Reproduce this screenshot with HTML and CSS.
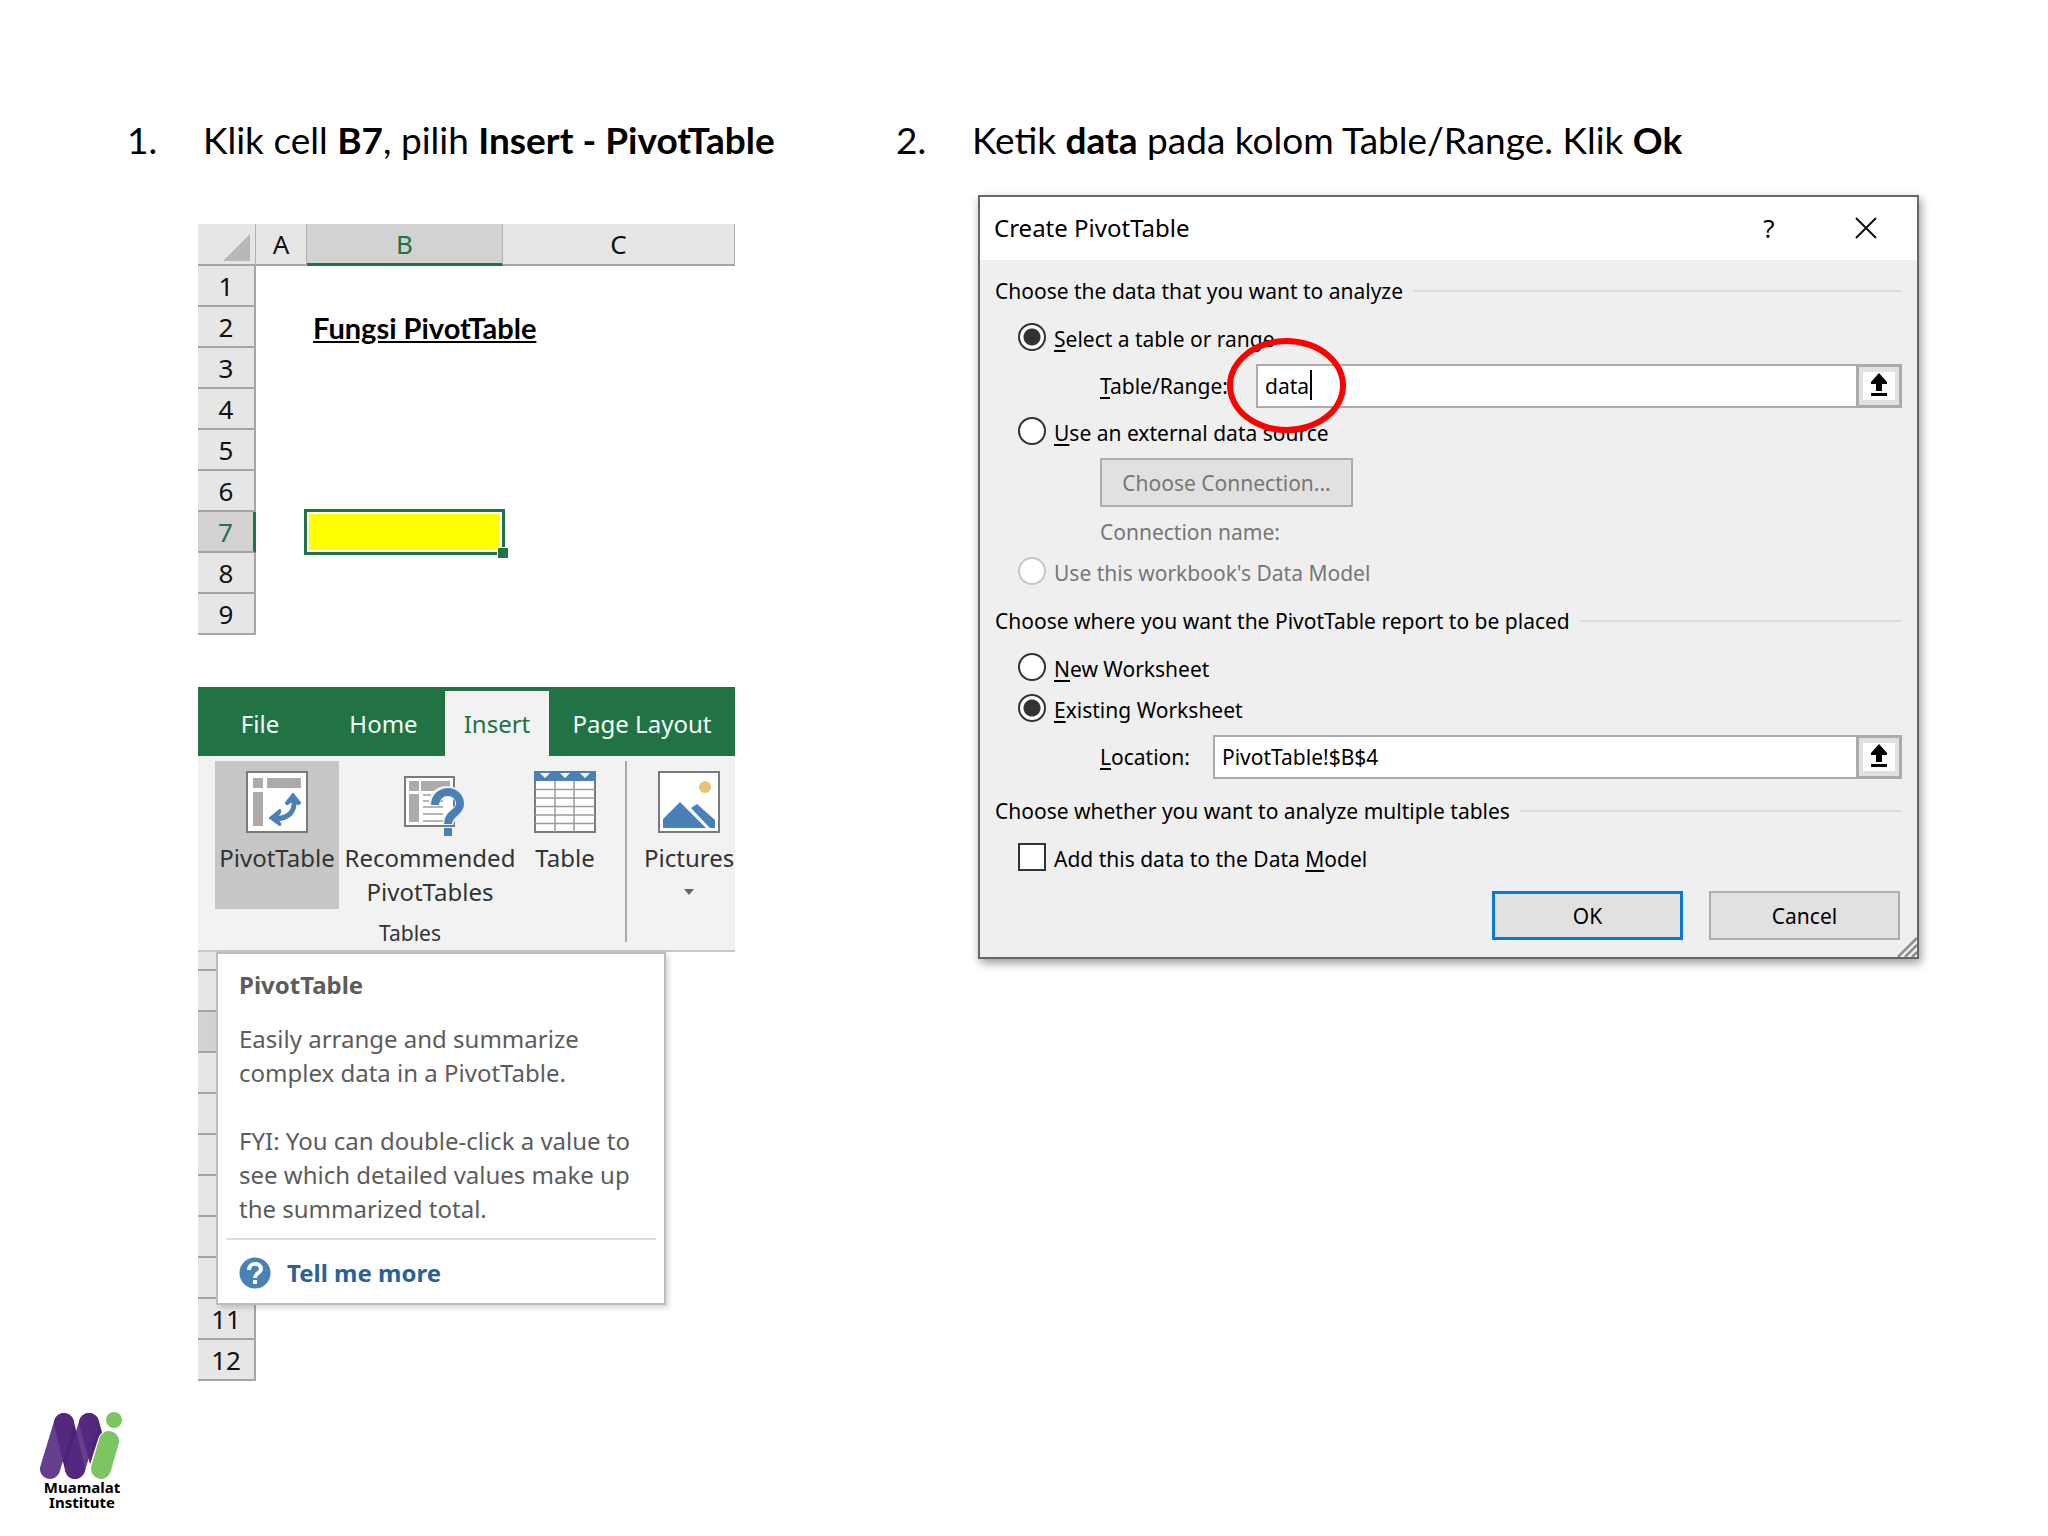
FILE: index.html
```
<!DOCTYPE html>
<html lang="id">
<head>
  <meta charset="UTF-8" />
  <meta name="viewport" content="width=device-width, initial-scale=1.0" />
  <title>Fungsi PivotTable</title>
  <link rel="stylesheet" href="styles.css">
</head>
<body>
  <main class="steps">
    <section class="step">
      <h2 class="step-title"><span class="step-number">1.</span><span>Klik cell <b>B7</b>, pilih <b>Insert - PivotTable</b></span></h2>

      <div class="step-body">
        <table class="sheet">
          <colgroup>
            <col class="col-head"><col class="col-a"><col class="col-b"><col>
          </colgroup>
          <thead>
            <tr>
              <th class="corner"><svg width="27" height="27" viewBox="0 0 27 27"><path d="M27 0V27H0Z" fill="#b8b8b8"/></svg></th>
              <th>A</th>
              <th class="active-col">B</th>
              <th>C</th>
            </tr>
          </thead>
          <tbody>
            <tr><th>1</th><td></td><td></td><td></td></tr>
            <tr><th>2</th><td></td><td class="sheet-title">Fungsi PivotTable</td><td></td></tr>
            <tr><th>3</th><td></td><td></td><td></td></tr>
            <tr><th>4</th><td></td><td></td><td></td></tr>
            <tr><th>5</th><td></td><td></td><td></td></tr>
            <tr><th>6</th><td></td><td></td><td></td></tr>
            <tr><th class="active-row">7</th><td></td><td class="selected"><span class="selection"></span></td><td></td></tr>
            <tr><th>8</th><td></td><td></td><td></td></tr>
            <tr><th>9</th><td></td><td></td><td></td></tr>
          </tbody>
        </table>

        <div class="excel">
          <nav class="tabs">
            <button type="button" class="tab">File</button>
            <button type="button" class="tab">Home</button>
            <button type="button" class="tab tab-active">Insert</button>
            <button type="button" class="tab">Page Layout</button>
          </nav>
          <div class="ribbon">
            <div class="group">
              <div class="tools">
                <button type="button" class="tool tool-pressed">
                  <svg width="62" height="62" viewBox="0 0 62 62">
                    <rect x="1" y="1" width="60" height="60" fill="#fff" stroke="#7a7a7a" stroke-width="2"/>
                    <path d="M7 7h10v10H7zM21 7h34v10H21zM7 21h10v34H7z" fill="#ababab"/>
                    <path d="M48 29C49 41 43 47 29 48" fill="none" stroke="#4a80b8" stroke-width="5"/>
                    <path d="M47 22l8 10-3 2-5-4-6 4-2-2zM23 47l11-9 1 3-4 6 4 6-1 2z" fill="#4a80b8" stroke="#4a80b8"/>
                  </svg>
                  <span>PivotTable</span>
                </button>
                <button type="button" class="tool tool-wide">
                  <svg width="62" height="62" viewBox="0 0 62 62">
                    <rect x="6" y="6" width="49" height="49" fill="#fff" stroke="#7a7a7a" stroke-width="2"/>
                    <path d="M10 10h10v10H10zM22 10h29v10H22zM10 23h10v28H10z" fill="#ababab"/>
                    <path d="M24 24h27M24 30h20M24 36h20M24 43h20M24 50h20" stroke="#b5b5b5" stroke-width="2"/>
                    <path d="M35 33C35 16 62 17 62 33C62 42 49 42 49 54" fill="none" stroke="#f2f2f2" stroke-width="11"/>
                    <path d="M36 34C36 17 61 17 61 33C61 42 49 42 49 53" fill="none" stroke="#4a80b8" stroke-width="8"/>
                    <path d="M45 57h8v8h-8z" fill="#4a80b8"/>
                  </svg>
                  <span>Recommended PivotTables</span>
                </button>
                <button type="button" class="tool">
                  <svg width="62" height="62" viewBox="0 0 62 62">
                    <rect x="1" y="1" width="60" height="60" fill="#fff" stroke="#7a7a7a" stroke-width="2"/>
                    <path d="M1 18.500H61M1 27H61M1 35.500H61M1 44H61M1 52.500H61M21 10V61M40 10V61" stroke="#9a9a9a" stroke-width="1.500"/>
                    <rect width="62" height="10" fill="#4a80b8"/>
                    <path d="M6 2h10l-5 5zM26 2h10l-5 5zM46 2h10l-5 5z" fill="#fff"/>
                  </svg>
                  <span>Table</span>
                </button>
              </div>
              <div class="group-name">Tables</div>
            </div>
            <div class="group group-last">
              <div class="tools">
                <button type="button" class="tool">
                  <svg width="62" height="62" viewBox="0 0 62 62">
                    <rect x="1" y="1" width="60" height="60" fill="#fff" stroke="#7a7a7a" stroke-width="2"/>
                    <circle cx="47" cy="16" r="6" fill="#e8c477"/>
                    <path d="M5 57V48L22 31L48 57ZM33 37L39 33L57 49V57H52Z" fill="#4a80b8"/>
                  </svg>
                  <span>Pictures</span>
                  <svg class="tool-arrow" width="10" height="6" viewBox="0 0 10 6"><path d="M0 0h10l-5 6z" fill="#666"/></svg>
                </button>
              </div>
            </div>
          </div>

          <div class="sheet-below">
            <table class="sheet sheet-rows">
              <tbody>
                <tr class="row-cut"><th></th></tr>
                <tr><th></th></tr>
                <tr><th class="shaded"></th></tr>
                <tr><th></th></tr>
                <tr><th></th></tr>
                <tr><th></th></tr>
                <tr><th></th></tr>
                <tr><th></th></tr>
                <tr><th></th></tr>
                <tr><th>11</th></tr>
                <tr><th>12</th></tr>
              </tbody>
            </table>

            <div class="tooltip" role="tooltip">
              <h3>PivotTable</h3>
              <p>Easily arrange and summarize<br>complex data in a PivotTable.</p>
              <p>FYI: You can double-click a value to<br>see which detailed values make up<br>the summarized total.</p>
              <a class="more" href="#">
                <svg width="32" height="32" viewBox="0 0 32 32">
                  <circle cx="16" cy="16" r="15.500" fill="#4a80b8"/>
                  <path d="M10 13C10 5 22 5 22 12C22 16 16 16 16 21" fill="none" stroke="#fff" stroke-width="4"/>
                  <path d="M14 23h4v4h-4z" fill="#fff"/>
                </svg>
                <span>Tell me more</span>
              </a>
            </div>
          </div>
        </div>
      </div>
    </section>

    <section class="step">
      <h2 class="step-title"><span class="step-number">2.</span><span>Ketik <b>data</b> pada kolom Table/Range. Klik <b>Ok</b></span></h2>

      <form class="dialog">
        <header class="dialog-bar">
          <h3>Create PivotTable</h3>
          <button type="button" class="bar-btn">?</button>
          <button type="button" class="bar-btn" aria-label="Close"><svg width="22" height="22" viewBox="0 0 22 22"><path d="M1 1L21 21M21 1L1 21" stroke="#111" stroke-width="2"/></svg></button>
        </header>

        <div class="dialog-body">
          <fieldset>
            <legend>Choose the data that you want to analyze</legend>
            <label class="option"><input type="radio" name="source" checked><span><u>S</u>elect a table or range</span></label>
            <div class="field">
              <label class="label-range" for="range"><u>T</u>able/Range:</label>
              <input type="text" id="range" value="data">
              <button type="button" class="pick" aria-label="Collapse dialog"><svg width="32" height="28" viewBox="0 0 32 28"><path d="M0 0h32v28H0z" fill="#fff"/><path d="M16 1l8 9v2h-5v7h-6v-7H8v-2zM8 21h16v3H8z"/></svg></button>
              <span class="caret"></span>
              <span class="ring"></span>
            </div>
            <label class="option"><input type="radio" name="source"><span><u>U</u>se an external data source</span></label>
            <button type="button" class="btn btn-connection" disabled>Choose Connection...</button>
            <div class="connection">Connection name:</div>
            <label class="option off"><input type="radio" name="source" disabled><span>Use this workbook's Data Model</span></label>
          </fieldset>

          <fieldset>
            <legend>Choose where you want the PivotTable report to be placed</legend>
            <label class="option"><input type="radio" name="place"><span><u>N</u>ew Worksheet</span></label>
            <label class="option"><input type="radio" name="place" checked><span><u>E</u>xisting Worksheet</span></label>
            <div class="field">
              <label class="label-location" for="location"><u>L</u>ocation:</label>
              <input type="text" id="location" value="PivotTable!$B$4">
              <button type="button" class="pick" aria-label="Collapse dialog"><svg width="32" height="28" viewBox="0 0 32 28"><path d="M0 0h32v28H0z" fill="#fff"/><path d="M16 1l8 9v2h-5v7h-6v-7H8v-2zM8 21h16v3H8z"/></svg></button>
            </div>
          </fieldset>

          <fieldset>
            <legend>Choose whether you want to analyze multiple tables</legend>
            <label class="option"><input type="checkbox"><span>Add this data to the Data <u>M</u>odel</span></label>
          </fieldset>

          <div class="actions">
            <button type="submit" class="btn btn-default">OK</button>
            <button type="button" class="btn">Cancel</button>
          </div>
        </div>
        <svg class="grip" width="20" height="20" viewBox="0 0 20 20"><path d="M1 20L20 1M8 20L20 8M15 20L20 15" stroke="#8c8c8c" stroke-width="2.500"/></svg>
      </form>
    </section>
  </main>

  <footer class="logo">
    <svg width="84" height="68" viewBox="0 0 84 68">
      <g fill="none" stroke-linecap="round" stroke-width="20">
        <path d="M24 11L35 57M49 11L61 54" stroke="#4b2277"/>
        <path d="M10 57L24 11M35 57L49 11" stroke="#542a80" stroke-opacity=".9"/>
        <path d="M60 57L69 29" stroke="#fff" stroke-width="22"/>
        <path d="M61 57L69 29" stroke="#7dc462"/>
      </g>
      <circle cx="74" cy="8" r="8" fill="#7dc462"/>
    </svg>
    <span>Muamalat</span>
    <span>Institute</span>
  </footer>
</body>
</html>
```
FILE: styles.css
```
* {
  box-sizing: border-box;
}
body {
  margin: 0;
  background: #fff;
  color: #111;
  font-family: "Noto Sans", "Open Sans", sans-serif;
}
h2, h3, p {
  margin: 0;
  font-weight: normal;
}
button, input {
  font-family: inherit;
  color: inherit;
  margin: 0;
}

/* two steps side by side */
.steps {
  display: grid;
  grid-template-columns: 608fr 1023fr;
  column-gap: 161px;
  padding: 116px 129px 0 127px;
}
.step {
  min-width: 0;
}
.step-title {
  display: flex;
  font-family: Lato, sans-serif;
  font-size: 37px;
  line-height: 48px;
  color: #000;
  white-space: nowrap;
}
.step-number {
  flex: 0 0 76px;
}
.step-body {
  margin: 60px 0 0 71px;
}

/* spreadsheet */
.sheet {
  width: 100%;
  table-layout: fixed;
  border-collapse: separate;
  border-spacing: 0;
  font-size: 26px;
  line-height: 38px;
}
.col-head {
  width: 58px;
}
.col-a {
  width: 51px;
}
.col-b {
  width: 196px;
}
.sheet th {
  height: 41px;
  padding: 0;
  font-weight: normal;
  background: #e6e6e6;
  border-right: 2px solid #a5a5a5;
  border-bottom: 2px solid #a5a5a5;
}
.sheet td {
  height: 41px;
  padding: 0;
}
.sheet thead th {
  height: 42px;
  border-right: 1px solid #b0b0b0;
}
.sheet .corner {
  padding: 6px 5px 0 0;
  text-align: right;
  line-height: 0;
}
.sheet .active-col {
  color: #217346;
  background: #d2d2d2;
  border-bottom: 3px solid #217346;
}
.sheet .active-row {
  color: #217346;
  background: #d2d2d2;
  border-right: 3px solid #217346;
}
.sheet .sheet-title {
  padding-left: 6px;
  font-family: Lato, sans-serif;
  font-weight: bold;
  font-size: 29px;
  color: #000;
  white-space: nowrap;
  text-decoration: underline;
}
.selected {
  position: relative;
}
.selection {
  position: absolute;
  inset: -3px -2px -2px -3px;
  border: 3px solid #217346;
  background: #ff0;
  box-shadow: inset 0 0 0 2px #fff;
}
.selection::after {
  content: "";
  position: absolute;
  right: -6px;
  bottom: -6px;
  width: 10px;
  height: 10px;
  background: #217346;
  border: 1px solid #fff;
  border-width: 1px 0 0 1px;
}

/* ribbon */
.excel {
  margin-top: 52px;
}
.tabs {
  display: grid;
  grid-template-columns: 124fr 123fr 104fr 186fr;
  height: 69px;
  padding-top: 4px;
  background: #217346;
}
.tab {
  border: 0;
  padding: 0;
  background: none;
  color: #f4fff8;
  font-size: 24px;
  white-space: nowrap;
}
.tab-active {
  background: #f2f2f2;
  color: #217346;
}
.ribbon {
  display: flex;
  height: 196px;
  padding: 5px 0 8px 17px;
  overflow: hidden;
  background: #f2f2f2;
  border-bottom: 2px solid #c8c8c8;
  color: #333;
}
.group {
  flex: 0 0 412px;
  border-right: 2px solid #ababab;
}
.group-last {
  flex: 0 0 auto;
  padding-left: 13px;
  border: 0;
}
.tools {
  display: flex;
  height: 148px;
}
.tool {
  display: flex;
  flex-direction: column;
  align-items: center;
  flex-shrink: 0;
  min-width: 88px;
  padding: 10px 4px 0;
  border: 0;
  background: none;
  font-size: 24px;
  line-height: 34px;
}
.tool svg {
  flex-shrink: 0;
  margin-bottom: 8px;
  overflow: visible;
}
.tool-pressed {
  width: 124px;
  background: #c6c6c6;
}
.tool-wide {
  width: 182px;
}
.tool .tool-arrow {
  margin-top: 14px;
}
.group-name {
  padding-right: 20px;
  font-size: 21px;
  line-height: 48px;
  text-align: center;
}

/* rows under the ribbon with the tooltip over them */
.sheet-below {
  position: relative;
}
.sheet-rows {
  width: 58px;
}
.sheet-rows .row-cut th {
  height: 19px;
}
.sheet-rows .shaded {
  background: #d2d2d2;
}
.tooltip {
  position: absolute;
  top: 0;
  left: 18px;
  width: 450px;
  padding: 14px 8px 13px;
  background: #fff;
  border: 2px solid #bdbdbd;
  box-shadow: 3px 3px 5px rgba(0, 0, 0, 0.15);
  color: #5c5c5c;
  font-size: 24px;
  line-height: 34px;
  white-space: nowrap;
}
.tooltip h3, .tooltip p {
  padding-left: 13px;
}
.tooltip h3 {
  font-size: 24px;
  font-weight: bold;
  margin-bottom: 20px;
}
.tooltip p {
  margin-bottom: 34px;
}
.more {
  display: flex;
  align-items: center;
  gap: 16px;
  margin-top: -22px;
  padding: 16px 13px 0;
  border-top: 2px solid #dcdcdc;
  color: #2b6199;
  font-weight: bold;
  text-decoration: none;
}

/* dialog */
.dialog {
  position: relative;
  margin: 31px 0 0 82px;
  border: 2px solid #666;
  background: #efefef;
  box-shadow: 2px 4px 9px rgba(0, 0, 0, 0.4);
  color: #000;
  font-size: 21px;
  line-height: 32px;
}
.dialog-bar {
  display: flex;
  align-items: center;
  height: 63px;
  padding: 0 26px 2px 14px;
  background: #fff;
}
.dialog-bar h3 {
  flex: 1;
  font-size: 24px;
}
.bar-btn {
  display: grid;
  place-items: center;
  width: 50px;
  height: 40px;
  margin-left: 47px;
  padding: 0;
  border: 0;
  background: none;
  font-size: 26px;
}
.dialog-body {
  padding: 15px 15px 17px;
}
fieldset {
  display: flex;
  flex-direction: column;
  gap: 9px;
  min-width: 0;
  margin: 0 0 16px;
  padding: 0;
  border: 0;
}
legend {
  display: flex;
  align-items: center;
  gap: 10px;
  width: 100%;
  margin-bottom: 16px;
  padding: 0;
}
legend::after {
  content: "";
  flex: 1;
  height: 2px;
  background: #dcdcdc;
}
.option {
  display: flex;
  align-items: center;
  gap: 8px;
  padding-left: 23px;
}
.option input {
  appearance: none;
  width: 28px;
  height: 28px;
  margin-bottom: 4px;
  border: 2px solid #333;
  background: #fff;
}
.option input[type="radio"] {
  border-radius: 50%;
}
.option input:checked {
  background: radial-gradient(circle, #333 8px, #fff 9px);
}
.option input:disabled {
  border-color: #c8c8c8;
}
.off, .connection {
  color: #777;
}
u {
  text-underline-offset: 3px;
  text-decoration-thickness: 2px;
}
.field {
  position: relative;
  display: flex;
  align-items: center;
  height: 44px;
  padding-left: 105px;
}
.label-range {
  width: 156px;
}
.label-location {
  width: 113px;
}
.field input {
  flex: 1;
  min-width: 0;
  height: 44px;
  padding: 0 7px;
  border: 2px solid #ababab;
  border-right: 0;
  background: #fff;
  font-size: 21px;
}
.pick {
  display: grid;
  place-items: center;
  width: 46px;
  height: 44px;
  padding: 0;
  border: 3px solid #ababab;
  background: #e1e1e1;
}
.caret {
  position: absolute;
  left: 315px;
  top: 6px;
  width: 2px;
  height: 30px;
  background: #000;
}
.ring {
  position: absolute;
  left: 232px;
  top: -26px;
  width: 119px;
  height: 95px;
  border: 6px solid #f00;
  border-radius: 50%;
}
.btn {
  width: 191px;
  height: 49px;
  padding: 0;
  border: 2px solid #adadad;
  background: #e1e1e1;
  font-size: 21px;
}
.btn-default {
  border: 3px solid #0a78d6;
}
.btn-connection {
  width: 253px;
  margin-left: 105px;
  color: #777;
}
.connection {
  padding-left: 105px;
}
.actions {
  display: flex;
  justify-content: flex-end;
  gap: 26px;
  padding-right: 2px;
}
.grip {
  position: absolute;
  right: 0;
  bottom: 0;
}

/* institute logo */
.logo {
  display: flex;
  flex-direction: column;
  align-items: center;
  width: 84px;
  margin: 31px 0 0 40px;
  color: #000;
  font-size: 15px;
  font-weight: bold;
  line-height: 15px;
}
```
